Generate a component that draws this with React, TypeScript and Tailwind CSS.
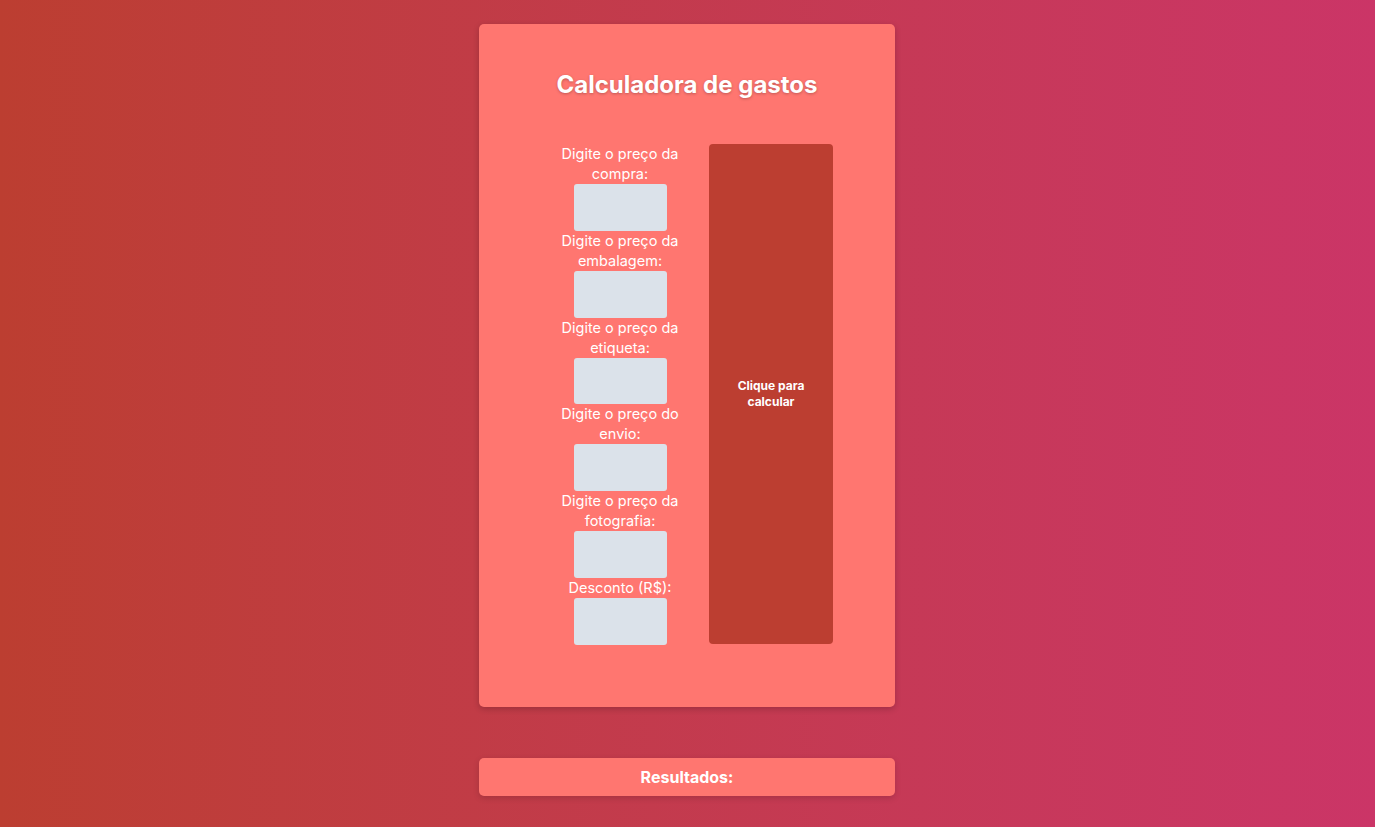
export default function App() {
  const fields = [
    "Digite o preço da compra:",
    "Digite o preço da embalagem:",
    "Digite o preço da etiqueta:",
    "Digite o preço do envio:",
    "Digite o preço da fotografia:",
    "Desconto (R$):",
  ];
  return (
    <div className="w-full min-h-[827px] bg-gradient-to-r from-[#bc3e31] to-[#cb3567] flex flex-col items-center pt-[24px]" style={{ fontFamily: "Inter, 'Noto Sans', sans-serif" }}>
      <div className="w-[416px] h-[683px] mr-[1px] bg-[#ff7670] rounded-[5px] shadow-[0_2px_6px_rgba(0,0,0,0.2)] flex flex-col">
        <h1 className="text-white text-[24px] font-bold text-center mt-[46px] leading-[30px] [text-shadow:0_1px_3px_rgba(0,0,0,0.25)]">
          Calculadora de gastos
        </h1>
        <div className="flex mt-[44px] pl-[77px]">
          <div className="w-[128px] flex flex-col items-center">
            {fields.map((f) => (
              <div key={f} className="flex flex-col items-center">
                <label className="text-white text-[14.5px] leading-[20px] text-center w-[128px]">{f}</label>
                <div className="w-[93px] h-[46.8px] bg-[#dbe2ea] rounded-[3px]" />
              </div>
            ))}
          </div>
          <button className="ml-[25px] w-[124px] h-[500px] bg-[#bc3e31] rounded-[4px] text-white text-[12px] font-bold leading-[16px] px-4">
            Clique para calcular
          </button>
        </div>
      </div>
      <div className="mt-[51px] w-[416px] h-[38px] mr-[1px] bg-[#ff7670] rounded-[5px] shadow-[0_2px_6px_rgba(0,0,0,0.15)] flex items-center justify-center">
        <span className="text-white text-[16px] font-bold">Resultados:</span>
      </div>
    </div>
  );
}
